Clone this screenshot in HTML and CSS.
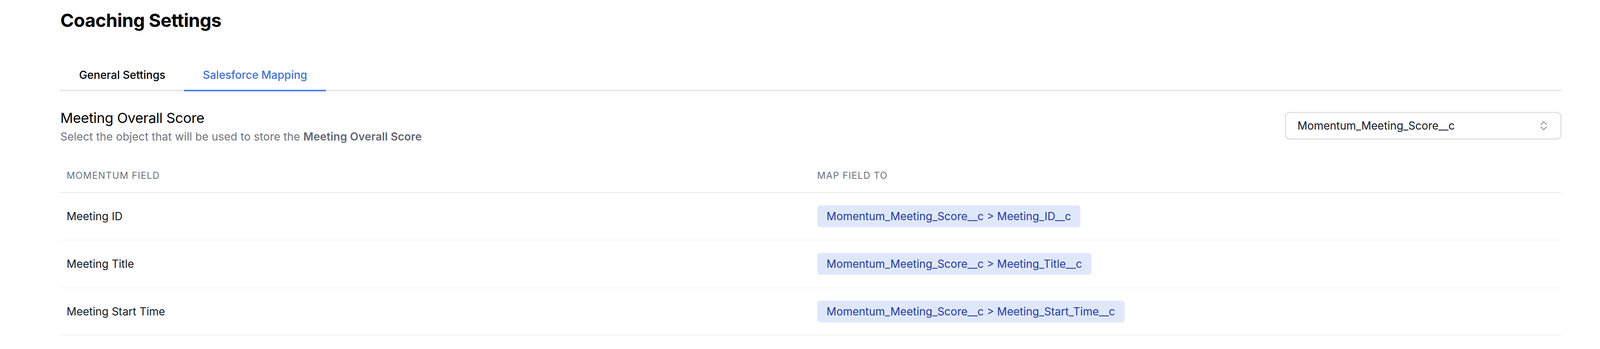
FILE: index.html
```html
<!DOCTYPE html>
<html lang="en">
<head>
    <meta charset="UTF-8">
    <meta name="viewport" content="width=device-width, initial-scale=1.0">
    <title>Coaching Settings</title>
    <link rel="stylesheet" href="styles.css">
</head>
<body>

<div class="page">
    <h1 class="page-title">Coaching Settings</h1>

    <nav class="tabs">
        <a class="tab" href="#">General Settings</a>
        <a class="tab active" href="#">Salesforce Mapping</a>
    </nav>

    <div class="section-head">
        <div>
            <h2 class="section-title">Meeting Overall Score</h2>
            <p class="section-desc">Select the object that will be used to store the <strong>Meeting Overall Score</strong></p>
        </div>
        <div class="select-box">
            <span>Momentum_Meeting_Score__c</span>
            <svg class="select-icon" width="18" height="26" viewBox="0 0 18 26" fill="none" stroke="#9ca3af" stroke-width="2.6" stroke-linecap="round" stroke-linejoin="round">
                <polyline points="2,10 9,2.5 16,10"/>
                <polyline points="2,16 9,23.5 16,16"/>
            </svg>
        </div>
    </div>

    <table class="map-table">
        <thead>
            <tr>
                <th>Momentum Field</th>
                <th>Map Field To</th>
            </tr>
        </thead>
        <tbody>
            <tr>
                <td>Meeting ID</td>
                <td><span class="badge">Momentum_Meeting_Score__c &gt; Meeting_ID__c</span></td>
            </tr>
            <tr>
                <td>Meeting Title</td>
                <td><span class="badge">Momentum_Meeting_Score__c &gt; Meeting_Title__c</span></td>
            </tr>
            <tr>
                <td>Meeting Start Time</td>
                <td><span class="badge">Momentum_Meeting_Score__c &gt; Meeting_Start_Time__c</span></td>
            </tr>
        </tbody>
    </table>
</div>

</body>
</html>
```

FILE: styles.css
```css
body {
    margin: 0;
    font-family: 'Inter', 'Noto Sans', sans-serif;
    background: #fff;
    color: #111827;
}
.page {
    padding: 20px 2.41vw 0 3.77vw;
}
.page-title {
    margin: 0 0 72px;
    font-size: 47px;
    line-height: 64px;
    font-weight: 700;
    letter-spacing: -0.5px;
    color: #000;
}
.tabs {
    display: flex;
    border-bottom: 4px solid #e5e7eb;
}
.tab {
    display: block;
    padding: 16px 48px 18px;
    margin-bottom: -4px;
    border-bottom: 4px solid transparent;
    font-size: 28px;
    line-height: 40px;
    font-weight: 500;
    color: #000;
    text-decoration: none;
}
.tab.active {
    color: #3f6fe0;
    border-bottom-color: #4c80ec;
}
.section-head {
    display: flex;
    justify-content: space-between;
    align-items: center;
    margin-top: 40px;
}
.section-title {
    margin: 0;
    font-size: 36px;
    line-height: 56px;
    font-weight: 400;
    letter-spacing: -0.4px;
    color: #000;
}
.section-desc {
    margin: 0;
    font-size: 28px;
    line-height: 40px;
    letter-spacing: 0.2px;
    color: #6b7280;
}
.section-desc strong {
    font-weight: 600;
    color: #5f6775;
}
.select-box {
    box-sizing: border-box;
    width: 17.28vw;
    height: 70px;
    display: flex;
    align-items: center;
    justify-content: space-between;
    padding: 0 34px 0 30px;
    border: 2px solid #d4d6dd;
    border-radius: 12px;
    box-shadow: 0 2px 4px rgba(0, 0, 0, 0.05);
    font-size: 28px;
    color: #111827;
}
.map-table {
    width: 100%;
    margin-top: 40px;
    border-collapse: collapse;
    table-layout: fixed;
}
.map-table th {
    padding: 24px 16px 26px;
    text-align: left;
    font-size: 24px;
    line-height: 32px;
    font-weight: 400;
    letter-spacing: 1.2px;
    text-transform: uppercase;
    color: #6b7280;
    border-bottom: 2px solid #e5e7eb;
}
.map-table td {
    padding: 32px 16px;
    font-size: 28px;
    line-height: 40px;
    color: #111827;
    border-bottom: 2px solid #f3f4f6;
}
.badge {
    display: inline-block;
    padding: 8px 24px;
    border-radius: 8px;
    background: #dfe8fa;
    color: #2338a6;
    font-size: 28px;
    line-height: 40px;
}
```
